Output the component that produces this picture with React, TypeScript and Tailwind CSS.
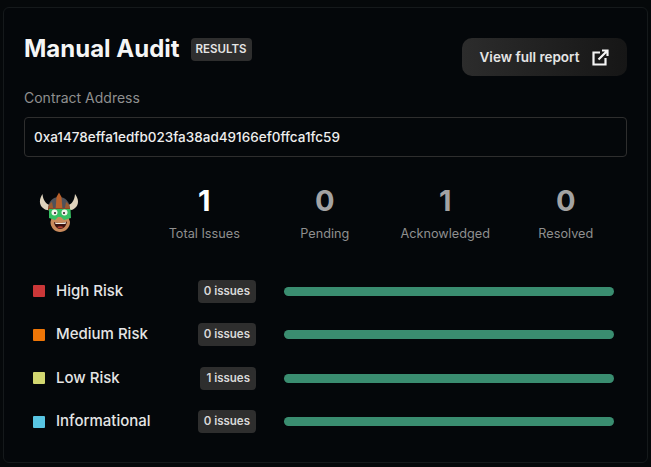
const stats = [
  { value: '1', label: 'Total Issues', tone: 'text-white' },
  { value: '0', label: 'Pending', tone: 'text-[#a3a3a3]' },
  { value: '1', label: 'Acknowledged', tone: 'text-[#a3a3a3]' },
  { value: '0', label: 'Resolved', tone: 'text-[#a3a3a3]' },
];

const risks = [
  { name: 'High Risk', count: '0 issues', swatch: 'bg-[#cb3738]' },
  { name: 'Medium Risk', count: '0 issues', swatch: 'bg-[#ef7607]' },
  { name: 'Low Risk', count: '1 issues', swatch: 'bg-[#d2d770]' },
  { name: 'Informational', count: '0 issues', swatch: 'bg-[#58c5e3]' },
];

function Mascot() {
  return (
    <svg width="40" height="42" viewBox="0 0 40 42">
      {/* horns */}
      <path d="M3.5 3 C0 8 0 14 4 17 C6 19 9 19.5 11 19 L11.5 14 C7 13.5 4 9 3.5 3 Z" fill="#dfd3bd" />
      <path d="M36 3 C40 8 40 14 36 17 C34 19 31 19.5 29 19 L28.5 14 C33 13.5 35.5 9 36 3 Z" fill="#dfd3bd" />
      {/* helmet */}
      <path d="M9 19 C9 10 14 6 20 6 C26 6 31 10 31 19 Z" fill="#4f525a" />
      <path d="M16.5 19 L17.5 6 L20 1.5 L22.5 6 L23.5 19 Z" fill="#b9602a" />
      <path d="M9 19 C9 14 11 12 13 11 L14.5 19 Z" fill="#9a5a30" />
      <path d="M31 19 C31 14 29 12 27 11 L25.5 19 Z" fill="#9a5a30" />
      <path d="M9 17 H31 V19 H9 Z" fill="#8a4a26" />
      {/* face */}
      <path d="M13 25 H29 L31 31 C31 37 26 41 21 41 C16 41 11.5 37 11.5 31 Z" fill="#c98a5c" />
      {/* goggles */}
      <path d="M10 18 H31.5 L32 27 L25 29 L22 26 H19 L16 29 L10 27 Z" fill="#37c063" />
      <circle cx="15.5" cy="21.5" r="3" fill="#f2f2ea" />
      <circle cx="25.5" cy="21.5" r="3" fill="#f2f2ea" />
      <circle cx="16" cy="22" r="1" fill="#1a1a1a" />
      <circle cx="25" cy="22" r="1" fill="#1a1a1a" />
      {/* mouth */}
      <path d="M15 31 C18 32.5 24 32.5 28 30.5 C27.5 35 24.5 38 21 38 C18 38 15.5 35 15 31 Z" fill="#3a1210" />
      <path d="M16 31.4 C19 32.4 24 32.4 27 31 L26.5 33 H16.5 Z" fill="#efe9df" />
      <path d="M18 36 C20 35 23 35 24.5 36 C23 37.6 19.5 37.8 18 36 Z" fill="#b5402f" />
    </svg>
  );
}

export default function App() {
  return (
    <div className="h-[467px] w-[651px] overflow-hidden bg-[#05080a] px-[3px] pt-[7px] font-['Inter','Liberation_Sans',sans-serif]">
      <div className="h-[456px] rounded-md border border-[#15191b] bg-[#04070a] pl-5 pr-5 pt-[30px]">
        {/* Header */}
        <div className="flex items-start justify-between">
          <div className="flex items-center gap-[11px]">
            <h1 className="pb-[2px] text-[24px] font-bold leading-[20px] text-[#f5f5f5]">Manual Audit</h1>
            <span className="rounded bg-[#2e2e2e] px-[5px] py-[4px] text-[11.5px] font-semibold leading-[15px] text-[#e5e5e5]">
              RESULTS
            </span>
          </div>
          <button className="flex h-[38px] w-[165px] items-center justify-center gap-[13px] rounded-[10px] bg-gradient-to-r from-[#2c2c2c] to-[#161616] text-[13.5px] font-semibold text-[#e5e5e5]">
            View full report
            <svg width="17" height="17" viewBox="0 0 17 17" fill="none" stroke="#f5f5f5" strokeWidth="2.2">
              <path d="M8 3.5H1.5V15.5H13.5V9" />
              <path d="M6.5 10.5L15 2M10 1.5H15.5V7" />
            </svg>
          </button>
        </div>

        {/* Contract address */}
        <label className="mt-[13px] block text-[14px] leading-[18px] text-[#8f8f8f]">Contract Address</label>
        <div className="mt-[10px] flex h-10 items-center rounded border border-[#2e2e2e] px-[9px] text-[13.5px] font-medium text-[#eeeeee]">
          0xa1478effa1edfb023fa38ad49166ef0ffca1fc59
        </div>

        {/* Stats */}
        <div className="mt-[26px] flex items-start">
          <div className="ml-[15px] w-[105px] pt-[8px]">
            <Mascot />
          </div>
          {stats.map((stat) => (
            <div key={stat.label} className="flex w-[120.5px] flex-col items-center">
              <span className={`text-[29px] font-bold leading-[35px] ${stat.tone}`}>{stat.value}</span>
              <span className="mt-[7px] text-[12.7px] leading-[18px] text-[#8f8f8f]">{stat.label}</span>
            </div>
          ))}
        </div>

        {/* Risk rows */}
        <div className="mt-[36.5px] flex flex-col gap-[20.5px] pl-[9px] pr-[13px]">
          {risks.map((risk) => (
            <div key={risk.name} className="flex h-[23px] items-center">
              <span className={`h-3 w-3 rounded-[1px] ${risk.swatch}`} />
              <span className="ml-[11px] text-[15px] font-medium text-[#e5e5e5]">{risk.name}</span>
              <span className="ml-auto rounded bg-[#2e2e2e] px-[6px] py-[3px] text-[11.5px] font-semibold leading-[17px] text-[#d9d9d9]">
                {risk.count}
              </span>
              <div className="ml-[28px] h-[9px] w-[330px] rounded-full bg-[#3a8d70]" />
            </div>
          ))}
        </div>
      </div>
    </div>
  );
}
